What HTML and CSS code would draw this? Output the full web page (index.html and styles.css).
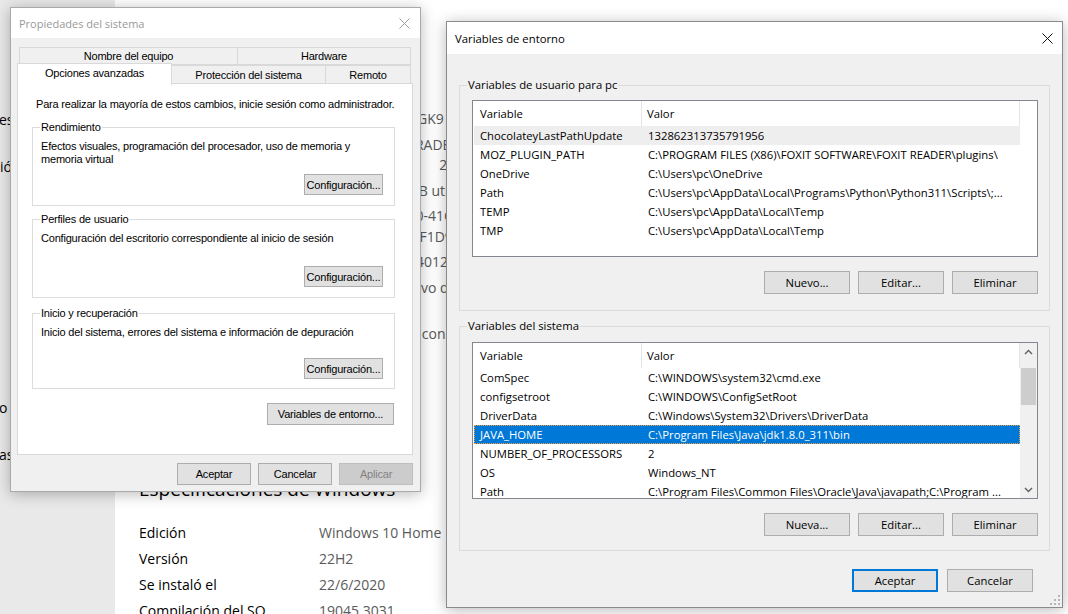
FILE: index.html
```html
<!DOCTYPE html>
<html lang="es">
<head>
<meta charset="utf-8">
<title>Variables de entorno</title>
<link rel="stylesheet" href="styles.css">
</head>
<body>
<div class="desktop">
  <aside class="sidebar">
    <span class="side-item s1">es</span>
    <span class="side-item s2">ió</span>
    <span class="side-item s3">o</span>
    <span class="side-item s4">as</span>
  </aside>

  <main class="about">
    <div class="specs device">
      <div class="spec-row"><span class="spec-label">Nombre del dispositivo</span><span class="spec-value">DESKTOP-UHJ8GK9</span></div>
      <div class="spec-row"><span class="spec-label">Procesador</span><span class="spec-value">AMD A6-9225&nbsp; RADEON R4, 5 COMPUTE<br>COMPUTE COR&nbsp;&nbsp;&nbsp;&nbsp;&nbsp;&nbsp;2C+3G</span></div>
      <div class="spec-row"><span class="spec-label">RAM instalada</span><span class="spec-value">4,00 GB (3,45 GB utilizable)</span></div>
      <div class="spec-row"><span class="spec-label">Id. del dispositivo</span><span class="spec-value">3F7A2C9E-B5D0-41C8-9E6A-<br>5B2A8C4E7A2BF1D9</span></div>
      <div class="spec-row"><span class="spec-label">Id. del producto</span><span class="spec-value">00326-81937-140126-AAOEM</span></div>
      <div class="spec-row"><span class="spec-label">Tipo de sistema</span><span class="spec-value">Sistema operativo de 64 bits,<br>procesador x64</span></div>
      <div class="spec-row"><span class="spec-label">Lápiz y entrada táctil</span><span class="spec-value">Compatibilidad con entrada táctil</span></div>
    </div>
    <h2 class="spec-title">Especificaciones de Windows</h2>
    <div class="specs win">
      <div class="spec-row"><span class="spec-label">Edición</span><span class="spec-value">Windows 10 Home</span></div>
      <div class="spec-row"><span class="spec-label">Versión</span><span class="spec-value">22H2</span></div>
      <div class="spec-row"><span class="spec-label">Se instaló el</span><span class="spec-value">22/6/2020</span></div>
      <div class="spec-row"><span class="spec-label">Compilación del SO</span><span class="spec-value">19045.3031</span></div>
    </div>
  </main>

  <!-- Propiedades del sistema -->
  <section class="window sysprops">
    <header class="titlebar">
      <span class="title">Propiedades del sistema</span>
      <span class="close"><svg width="11" height="11" viewBox="0 0 11 11"><path d="M0.5 0.5 L10.5 10.5 M10.5 0.5 L0.5 10.5" stroke="#9a9a9a" stroke-width="1" fill="none"/></svg></span>
    </header>
    <div class="sp-body">
      <div class="tabs">
        <div class="tab-row back">
          <span class="tab t-nombre">Nombre del equipo</span>
          <span class="tab t-hard">Hardware</span>
        </div>
        <div class="tab-row front">
          <span class="tab active t-opc">Opciones avanzadas</span>
          <span class="tab t-prot">Protección del sistema</span>
          <span class="tab t-rem">Remoto</span>
        </div>
      </div>
      <div class="tab-panel">
        <p class="intro">Para realizar la mayoría de estos cambios, inicie sesión como administrador.</p>
        <fieldset class="group first">
          <legend>Rendimiento</legend>
          <p class="group-text">Efectos visuales, programación del procesador, uso de memoria y<br>memoria virtual</p>
          <div class="btn-row"><button class="btn-c">Configuración...</button></div>
        </fieldset>
        <fieldset class="group">
          <legend>Perfiles de usuario</legend>
          <p class="group-text">Configuración del escritorio correspondiente al inicio de sesión</p>
          <div class="btn-row"><button class="btn-c">Configuración...</button></div>
        </fieldset>
        <fieldset class="group third">
          <legend>Inicio y recuperación</legend>
          <p class="group-text">Inicio del sistema, errores del sistema e información de depuración</p>
          <div class="btn-row"><button class="btn-c">Configuración...</button></div>
        </fieldset>
        <div class="btn-row env-row"><button class="btn-c btn-env">Variables de entorno...</button></div>
      </div>
      <div class="sp-footer">
        <button class="btn-c btn-foot">Aceptar</button>
        <button class="btn-c btn-foot">Cancelar</button>
        <button class="btn-c btn-foot disabled">Aplicar</button>
      </div>
    </div>
  </section>

  <!-- Variables de entorno -->
  <section class="window envvars">
    <header class="titlebar ev-title">
      <span class="title">Variables de entorno</span>
      <span class="close"><svg width="11" height="11" viewBox="0 0 11 11"><path d="M0.5 0.5 L10.5 10.5 M10.5 0.5 L0.5 10.5" stroke="#111" stroke-width="1" fill="none"/></svg></span>
    </header>
    <div class="ev-body">
      <fieldset class="ev-group">
        <legend>Variables de usuario para pc</legend>
        <div class="list">
          <div class="list-main">
            <div class="lrow head"><span class="c1">Variable</span><span class="c2">Valor</span></div>
            <div class="lrow hot"><span class="c1">ChocolateyLastPathUpdate</span><span class="c2">132862313735791956</span></div>
            <div class="lrow"><span class="c1">MOZ_PLUGIN_PATH</span><span class="c2">C:\PROGRAM FILES (X86)\FOXIT SOFTWARE\FOXIT READER\plugins\</span></div>
            <div class="lrow"><span class="c1">OneDrive</span><span class="c2">C:\Users\pc\OneDrive</span></div>
            <div class="lrow"><span class="c1">Path</span><span class="c2">C:\Users\pc\AppData\Local\Programs\Python\Python311\Scripts\;...</span></div>
            <div class="lrow"><span class="c1">TEMP</span><span class="c2">C:\Users\pc\AppData\Local\Temp</span></div>
            <div class="lrow"><span class="c1">TMP</span><span class="c2">C:\Users\pc\AppData\Local\Temp</span></div>
          </div>
          <div class="list-side"></div>
        </div>
        <div class="ev-btns">
          <button class="btn-e">Nuevo...</button>
          <button class="btn-e">Editar...</button>
          <button class="btn-e">Eliminar</button>
        </div>
      </fieldset>

      <fieldset class="ev-group second">
        <legend>Variables del sistema</legend>
        <div class="list">
          <div class="list-main">
            <div class="lrow head"><span class="c1">Variable</span><span class="c2">Valor</span></div>
            <div class="lrow"><span class="c1">ComSpec</span><span class="c2">C:\WINDOWS\system32\cmd.exe</span></div>
            <div class="lrow"><span class="c1">configsetroot</span><span class="c2">C:\WINDOWS\ConfigSetRoot</span></div>
            <div class="lrow"><span class="c1">DriverData</span><span class="c2">C:\Windows\System32\Drivers\DriverData</span></div>
            <div class="lrow selected"><span class="c1">JAVA_HOME</span><span class="c2">C:\Program Files\Java\jdk1.8.0_311\bin</span></div>
            <div class="lrow"><span class="c1">NUMBER_OF_PROCESSORS</span><span class="c2">2</span></div>
            <div class="lrow"><span class="c1">OS</span><span class="c2">Windows_NT</span></div>
            <div class="lrow"><span class="c1">Path</span><span class="c2">C:\Program Files\Common Files\Oracle\Java\javapath;C:\Program ...</span></div>
          </div>
          <div class="list-side scrollbar">
            <span class="sb-btn"><svg width="9" height="6" viewBox="0 0 9 6"><path d="M1 5 L4.5 1.5 L8 5" stroke="#606060" stroke-width="1.4" fill="none"/></svg></span>
            <span class="sb-track"><span class="sb-thumb"></span></span>
            <span class="sb-btn"><svg width="9" height="6" viewBox="0 0 9 6"><path d="M1 1 L4.5 4.5 L8 1" stroke="#606060" stroke-width="1.4" fill="none"/></svg></span>
          </div>
        </div>
        <div class="ev-btns">
          <button class="btn-e">Nueva...</button>
          <button class="btn-e">Editar...</button>
          <button class="btn-e">Eliminar</button>
        </div>
      </fieldset>

      <div class="ev-footer">
        <button class="btn-e default">Aceptar</button>
        <button class="btn-e">Cancelar</button>
      </div>
    </div>
    <span class="grip"><svg width="10" height="10" viewBox="0 0 10 10" fill="#b5b5b5"><rect x="8" y="0" width="2" height="2"/><rect x="4" y="4" width="2" height="2"/><rect x="8" y="4" width="2" height="2"/><rect x="0" y="8" width="2" height="2"/><rect x="4" y="8" width="2" height="2"/><rect x="8" y="8" width="2" height="2"/></svg></span>
  </section>
</div>
</body>
</html>
```

FILE: styles.css
```css
* { box-sizing: border-box; }
html, body { margin: 0; padding: 0; }
body {
  width: 1068px;
  height: 614px;
  overflow: hidden;
  background: #ffffff;
  font-family: "Open Sans", "Noto Sans", sans-serif;
  color: #000;
}

.desktop {
  position: relative;
  width: 1068px;
  height: 614px;
  display: flex;
  overflow: hidden;
}

/* ---------- background settings page ---------- */
.sidebar {
  width: 115px;
  flex: none;
  background: #e9e9e9;
  display: flex;
  flex-direction: column;
  font-size: 14px;
  overflow: hidden;
}
.side-item { line-height: 20px; margin-left: -1px; white-space: nowrap; }
.s1 { margin-top: 110px; }
.s2 { margin-top: 27px; margin-left: 0; }
.s3 { margin-top: 221px; }
.s4 { margin-top: 27px; }

.about {
  flex: 1;
  padding: 109px 0 0 24px;
  font-size: 14px;
}
.specs { display: flex; flex-direction: column; gap: 5px; }
.spec-row { display: flex; line-height: 20.5px; }
.spec-label { width: 180px; flex: none; color: #000; }
.spec-value { color: #5a5a5a; white-space: nowrap; }
.spec-title {
  margin: 133px 0 22px 0;
  font-size: 19px;
  line-height: 24px;
  font-weight: 400;
  color: #000;
}
.specs.win { gap: 5.5px; }

/* ---------- windows ---------- */
.window {
  position: absolute;
  display: flex;
  flex-direction: column;
  background: #f0f0f0;
  box-shadow: 0 2px 14px rgba(0, 0, 0, 0.28);
}
.titlebar {
  flex: none;
  background: #ffffff;
  display: flex;
  align-items: center;
  justify-content: space-between;
  font-family: "Open Sans", sans-serif;
  font-size: 11px;
  letter-spacing: 0;
}
.close { width: 32px; display: flex; justify-content: center; align-items: center; }

/* Propiedades del sistema */
.sysprops {
  left: 10px;
  top: 7px;
  width: 411px;
  height: 485px;
  border: 1px solid #aaaaaa;
  font-family: "Liberation Sans", Arial, sans-serif;
  font-size: 11px;
  letter-spacing: -0.2px;
}
.sysprops .titlebar { height: 30px; padding-left: 8px; }
.sysprops .title { color: #999999; }

.sp-body { padding: 9px 7px 0 6px; display: flex; flex-direction: column; }
.tabs { display: flex; flex-direction: column; }
.tab-row { display: flex; }
.tab-row.back { margin-left: 2px; height: 18px; }
.tab-row.front { height: 19px; }
.tab {
  border: 1px solid #d9d9d9;
  background: #f0f0f0;
  display: flex;
  align-items: center;
  justify-content: center;
  white-space: nowrap;
}
.tab + .tab { margin-left: -1px; }
.t-nombre { width: 219px; }
.t-hard { width: 174px; }
.t-opc { width: 155px; }
.t-prot { width: 155px; }
.t-rem { width: 86px; }
.tab.active {
  position: relative;
  z-index: 2;
  margin-top: -2px;
  height: 22px;
  background: #ffffff;
  border-bottom: none;
  padding-bottom: 4px;
}

.tab-panel {
  height: 372px;
  margin-top: -1px;
  background: #ffffff;
  border: 1px solid #d9d9d9;
  padding: 14px 17px 0 14px;
  display: flex;
  flex-direction: column;
}
.intro { margin: 0 0 0 4px; line-height: 13px; white-space: nowrap; }
.group {
  margin: 7px 0 0 0;
  padding: 6px 11px 10px 8px;
  border: 1px solid #dcdcdc;
  min-width: 0;
}
.group.first { margin-top: 10px; }
.group.third { margin-top: 9px; padding-bottom: 9px; }
.group.third .btn-row { margin-top: 6px; }
.group legend { padding: 0 1px; margin-left: -1px; line-height: 13px; }
.group-text { margin: 0; line-height: 13px; min-height: 26px; white-space: nowrap; }
.btn-row { display: flex; justify-content: flex-end; margin-top: 8px; }
.btn-c {
  font-family: "Liberation Sans", Arial, sans-serif;
  font-size: 11px;
  letter-spacing: -0.2px;
  color: #000;
  background: #e1e1e1;
  border: 1px solid #adadad;
  height: 21px;
  width: 79px;
  padding: 0;
  margin: 0;
}
.env-row { margin-top: 14px; margin-right: 1px; }
.btn-env { width: 127px; height: 22px; }
.sp-footer { display: flex; justify-content: flex-end; gap: 7px; margin-top: 8px; padding-right: 0; }
.btn-foot { width: 74px; height: 22px; }
.btn-c.disabled { background: #cccccc; border-color: #bfbfbf; color: #838383; }

/* Variables de entorno */
.envvars {
  left: 446px;
  top: 21px;
  width: 617px;
  height: 587px;
  border: 1px solid #8a8a8a;
  font-family: "Open Sans", sans-serif;
  font-size: 11.3px;
}
.ev-title { height: 32px; padding-left: 8px; font-size: 11.3px; }
.ev-title .close { width: 30px; }
.ev-body { padding: 23px 12px 0 12px; display: flex; flex-direction: column; }
.ev-group {
  margin: 0;
  padding: 7px 11px 16px 12px;
  border: 1px solid #dcdcdc;
  min-width: 0;
}
.ev-group.second { margin-top: 7px; padding-top: 8px; padding-bottom: 14px; }
.ev-group legend { padding: 0 1px; margin-left: -5px; line-height: 16px; }

.list {
  height: 157px;
  background: #ffffff;
  border: 1px solid #828790;
  padding: 0 0 0 1px;
  display: flex;
  overflow: hidden;
}
.list-main { flex: 1; display: flex; flex-direction: column; overflow: hidden; }
.list-side { width: 17px; flex: none; background: #ffffff; }
.lrow { display: flex; height: 19px; line-height: 19px; white-space: nowrap; flex: none; }
.lrow.head { height: 25px; line-height: 25px; }
.lrow .c1 { width: 168px; flex: none; padding-left: 6px; overflow: hidden; }
.lrow .c2 { flex: 1; padding-left: 6px; overflow: hidden; }
.lrow.head .c1 { border-right: 1px solid #e5e5e5; }
.lrow.head .c2 { border-right: 1px solid #e5e5e5; padding-left: 5px; }
.lrow.hot { background: #eeeeee; }
.lrow.selected {
  background: #0078d7;
  color: #ffffff;
  outline: 1px dotted #f0a040;
  outline-offset: -1px;
}

.scrollbar { background: #f0f0f0; display: flex; flex-direction: column; }
.sb-btn { height: 17px; flex: none; display: flex; align-items: center; justify-content: center; }
.sb-track { flex: 1; display: flex; flex-direction: column; align-items: center; }
.sb-thumb { width: 15px; height: 37px; margin-top: 8px; background: #cdcdcd; }

.ev-btns { display: flex; justify-content: flex-end; gap: 8px; margin-top: 14px; }
.btn-e {
  font-family: "Open Sans", sans-serif;
  font-size: 11.3px;
  color: #000;
  background: #e1e1e1;
  border: 1px solid #adadad;
  width: 86px;
  height: 23px;
  padding: 0;
  margin: 0;
}
.btn-e.default { border: 2px solid #0078d7; }
.ev-footer { display: flex; justify-content: flex-end; gap: 9px; margin-top: 18px; padding-right: 17px; }

.grip { position: absolute; right: 2px; bottom: 2px; line-height: 0; }
```
